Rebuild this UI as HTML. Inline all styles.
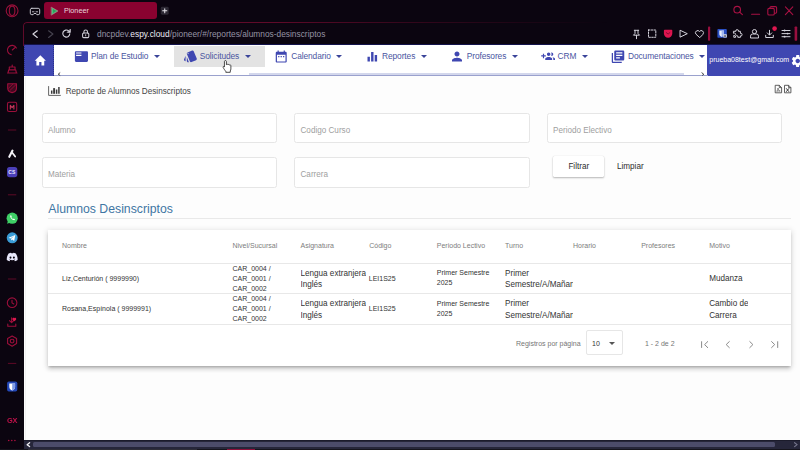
<!DOCTYPE html>
<html lang="es">
<head>
<meta charset="utf-8">
<title>Pioneer</title>
<style>
*{box-sizing:border-box;margin:0;padding:0}
html,body{width:800px;height:450px;overflow:hidden}
body{position:relative;background:#fdfdfd;font-family:"Liberation Sans",sans-serif;font-size:8.1px;color:#333}
.abs{position:absolute}
svg{position:absolute;overflow:visible}
/* browser chrome */
#chrome{left:0;top:0;width:800px;height:45px;background:#0b0510}
#side{left:0;top:0;width:24px;height:450px;background:#0b0510}
#tab{left:44.3px;top:1.9px;width:112.7px;height:17.3px;background:#8a0230;border-radius:3px}
#tab span{position:absolute;left:19.6px;top:3.7px;font-size:7.25px;color:#e9d5dc;white-space:nowrap;line-height:10px}
#frame{left:22.9px;top:21.5px;width:790px;height:24px;border:1px solid #600a29;border-right:0;border-bottom:0;border-radius:4px 0 0 0;pointer-events:none;-webkit-mask-image:linear-gradient(90deg,#000 0,#000 32%,rgba(0,0,0,.5) 48%,rgba(0,0,0,.2) 64%,transparent 74%)}
#url{left:97px;top:27.6px;font-size:8.37px;line-height:12px;color:#9593a3;white-space:nowrap}
#url b{font-weight:normal;color:#ecebf2}
#navline{left:24px;top:43.6px;width:776px;height:1.4px;background:#13134c}
/* app nav */
#nav{left:24px;top:45px;width:776px;height:30.5px;background:#fff}
#home{left:24px;top:45px;width:30.3px;height:30.5px;background:#3f47b1;border-right:1px dotted #2a3085;border-left:1px dotted #2a3085}
#user{left:707.2px;top:45px;width:92.8px;height:30.5px;background:#3f47b1}
#user span{position:absolute;left:2.1px;top:10.3px;font-size:7px;line-height:10px;color:#fff;white-space:nowrap}
#hover{left:174px;top:46px;width:90.5px;height:20.7px;background:#e3e3e3}
.nt{position:absolute;top:50.8px;line-height:10px;font-size:8.4px;letter-spacing:-.09px;color:#4a559f;white-space:nowrap}
.caret{position:absolute;top:55.3px;width:0;height:0;margin-left:-.4px;border-left:3.3px solid transparent;border-right:3.3px solid transparent;border-top:3.5px solid #3a4499}
#sb1{left:54px;top:75px;width:653.5px;height:1.3px;background:#9aa1cd}
#sb2{left:248.5px;top:72.7px;width:435px;height:2.5px;background:#d3d7ec}
/* content */
#leftline{left:25px;top:77px;width:1px;height:363px;background:#f2f2f2}
#title{left:65.7px;top:87.2px;font-size:8.17px;line-height:10px;color:#444;white-space:nowrap}
.inp{position:absolute;height:29.8px;width:235.5px;border:1px solid #e6e6e6;border-radius:2.5px;background:#fff}
.inp span{position:absolute;left:5.5px;top:11.5px;font-size:8.15px;line-height:10px;color:#a0a0a0;white-space:nowrap}
#btn{left:553px;top:156px;width:51px;height:21px;background:#fff;border-radius:1.5px;box-shadow:0 1px 2px rgba(0,0,0,.28),0 0 1px rgba(0,0,0,.15)}
#btn span,#limpiar{position:absolute;font-size:8.15px;line-height:10px;color:#2d2d2d;white-space:nowrap}
#btn span{left:15.4px;top:5.5px}
#limpiar{left:617px;top:161.5px}
#h2{left:48.3px;top:202px;font-size:12.26px;line-height:14px;color:#3f76a3;white-space:nowrap}
#hr{left:48px;top:218.2px;width:743px;height:1px;background:#e9e9e9}
#card{left:48px;top:230px;width:743.3px;height:135.5px;background:#fff;box-shadow:0 2.1px 2.1px -1.2px rgba(0,0,0,.2),0 3.300px 4.200px .4px rgba(0,0,0,.13),0 1.250px 5.800px .8px rgba(0,0,0,.11)}
.rl{position:absolute;left:48px;width:743.3px;height:1px;background:#e8e8e8}
.th{position:absolute;top:240.7px;font-size:7px;line-height:10px;color:#7d7d7d;white-space:nowrap}
.c7{position:absolute;font-size:7px;line-height:10px;color:#333;white-space:nowrap}
.c8{position:absolute;font-size:8.15px;line-height:12.4px;color:#333;white-space:nowrap;overflow:hidden}
/* scrollbar */
#hs{left:24px;top:440px;width:776px;height:8.5px;background:#26263a;border-top:1px solid #1b1b2b}
#hsthumb{left:32.8px;top:442px;width:742.7px;height:5px;background:#4c4c6a;border-radius:1.5px}
#bot{left:0;top:448.5px;width:800px;height:1.5px;background:#15141c}
</style>
</head>
<body>
<div id="chrome" class="abs"></div>
<div id="side" class="abs"></div>
<div id="tab" class="abs"><span>Pioneer</span></div>
<div id="url" class="abs">dncpdev.<b>espy.cloud</b>/pioneer/#/reportes/alumnos-desinscriptos</div>


<!-- CHROME ICONS -->
<svg style="left:0;top:0" width="800" height="45" viewBox="0 0 800 45" fill="none" stroke-linecap="round" stroke-linejoin="round">
  <!-- opera -->
  <circle cx="12.1" cy="10.8" r="5.9" stroke="#98103a" stroke-width="1.1"/>
  <ellipse cx="12.1" cy="10.8" rx="2.8" ry="4.7" stroke="#98103a" stroke-width="1.1"/>
  <!-- workspace icon -->
  <path d="M31.8 8.3h6.4a1.5 1.5 0 0 1 1.5 1.5v3.4a1.5 1.5 0 0 1-1.5 1.5h-1.3l-.9-1.2h-2l-.9 1.2h-1.3a1.5 1.5 0 0 1-1.5-1.5V9.800a1.500 1.500 0 0 1 1.500-1.500z" stroke="#c9c7d0" stroke-width="1"/>
  <path d="M32.400 11.800h1.600M36 11.800h1.600" stroke="#c9c7d0" stroke-width=".9"/>
  <!-- favicon -->
  <path d="M51.500 7.300L58 11l-6.500 4z" fill="#49c17a" stroke="#c07f8f" stroke-width=".6"/>
  <path d="M53 9l3.300 2L53 13z" fill="#2f9d5c" stroke="none"/>
  <!-- new tab -->
  <rect x="160.800" y="6.800" width="7.900" height="7.900" rx="1.400" fill="#2c2833" stroke="none"/>
  <path d="M164.750 8.650v4.200M162.650 10.750h4.200" stroke="#e6e4ea" stroke-width="1.050"/>
  <!-- window controls -->
  <g stroke="#a81143" stroke-width="1.100">
    <circle cx="737.200" cy="9.700" r="3.300"/>
    <path d="M739.700 12.200l2.700 2.500"/>
    <path d="M751.600 14.300h8"/>
    <rect x="767.800" y="8.400" width="6.500" height="6.600" rx="1.300"/>
    <path d="M770 8.200V7.900a1.300 1.300 0 0 1 1.300-1.300h4a1.300 1.300 0 0 1 1.300 1.300v4a1.300 1.300 0 0 1-1.300 1.300h-.8"/>
    <path d="M785.400 6.900l7.400 7.700M792.800 6.900l-7.400 7.700"/>
  </g>
  <!-- url bar icons -->
  <path d="M37.300 30.800l-4.300 3.300 4.300 3.300" stroke="#d9d7e0" stroke-width="1.200"/>
  <path d="M48.600 30.800l4.300 3.300-4.300 3.300" stroke="#45424e" stroke-width="1.200"/>
  <path d="M69.800 33.800a3.500 3.500 0 1 1-1.200-2.900" stroke="#d2d0da" stroke-width="1.150"/>
  <path d="M70.400 29.500v2.900h-2.900z" fill="#d2d0da" stroke="#d2d0da" stroke-width=".7"/>
  <rect x="82.600" y="33" width="6.200" height="4.600" rx="1" stroke="#cfcdd6" stroke-width="1.050"/>
  <path d="M83.900 33v-1.300a1.800 1.800 0 0 1 3.600 0V33" stroke="#cfcdd6" stroke-width="1.050"/>
  <path d="M85.700 34.700v1.200" stroke="#cfcdd6" stroke-width=".9"/>
  <!-- right toolbar -->
  <g stroke="#d3d1da" stroke-width="1">
    <!-- pin -->
    <path d="M634.300 30.300h4.400M635 30.300v3.200l-1.500 1.700h6l-1.500-1.700v-3.200M636.500 35.200v3.500"/>
    <!-- snapshot -->
    <rect x="648.500" y="30" width="7.300" height="7.300" stroke-dasharray="1.600 1.250"/>
    <!-- play -->
    <path d="M680.400 30.400l6.900 3.300-6.900 3.300z"/>
    <!-- heart -->
    <path d="M699.500 37.400l-3.600-3.300a2.050 2.050 0 0 1 3.600-2.600 2.050 2.050 0 0 1 3.600 2.600z"/>
    <!-- puzzle -->
    <path d="M735 31.600h2.100a1.300 1.300 0 1 1 2.500 0h2v2.100a1.300 1.300 0 1 1 0 2.500v1.400h-2.600a1.200 1.200 0 1 0-2.200 0H735v-2a1.250 1.250 0 1 0 0-2.200z" transform="translate(-1.200 -.3)"/>
    <!-- person -->
    <circle cx="754.500" cy="31.600" r="2.100"/>
    <path d="M750.500 37.600v-1.400a2.200 2.200 0 0 1 2.200-2.200h3.600a2.200 2.200 0 0 1 2.200 2.200v1.400z"/>
    <!-- download -->
    <path d="M769.500 30.300v4.500M767.300 32.900l2.200 2.200 2.200-2.200M765.700 35.300v2.200h7.600v-2.200"/>
    <!-- sliders -->
    <path d="M782 30.500h8M782 33.600h8M782 36.700h8"/>
  </g>
  <circle cx="784.600" cy="30.500" r=".9" fill="#d3d1da"/><circle cx="787.600" cy="33.600" r=".9" fill="#d3d1da"/><circle cx="784.600" cy="36.700" r=".9" fill="#d3d1da"/>
  <circle cx="774.600" cy="28.600" r="2.300" fill="#e0174f"/>
  <!-- pocket red -->
  <path d="M664.700 29.700h6.800a.8.800 0 0 1 .8.800v3a4.200 4.200 0 0 1-8.400 0v-3a.8.800 0 0 1 .8-.8z" fill="#de154f"/>
  <path d="M666.300 32.600l1.800 1.500 1.800-1.500" stroke="#7a0a2c" stroke-width=".9"/>
  <!-- bitwarden -->
  <rect x="717.400" y="29.100" width="9.400" height="8.600" rx=".8" fill="#2b50c4"/>
  <path d="M719.300 30.400h4.600v3.300c0 1.700-1.300 2.700-2.300 3.200-1-.5-2.300-1.500-2.300-3.200z" fill="#e9eefc"/>
  <path d="M721.600 30.400h2.300v3.300c0 1.700-1.300 2.700-2.300 3.200z" fill="#9fb4ee"/>
  <rect x="723.300" y="34.300" width="3.500" height="3.300" rx=".5" fill="#dcdde5"/>
  <rect x="724.200" y="35.300" width="1.700" height="1.500" fill="#44465a"/>
  <!-- crimson bars -->
  <rect x="708" y="26.400" width="2.200" height="14.300" rx=".8" fill="#980f3e"/>
  <rect x="794.600" y="26.400" width="2.600" height="14.300" rx=".8" fill="#980f3e"/>
</svg>


<!-- SIDEBAR ICONS -->
<svg style="left:0;top:40px" width="24" height="410" viewBox="0 40 24 410" fill="none" stroke-linecap="round" stroke-linejoin="round">
  <g stroke="#9c0f3b" stroke-width="1.100">
    <!-- speed dial gauge -->
    <path d="M16.400 48.100A4.700 4.700 0 1 0 11.300 54.700"/>
    <path d="M12.300 50l3-2.700"/>
    <!-- bag -->
    <path d="M7.600 73h9.400M8 72.800l.7-3h7l.7 3M9.300 69.700v-2.700h5.700v2.700M12.200 66.900v-1.800" stroke-width="1.150"/>
    <!-- shield -->
    <path d="M7.700 83.700h8.800v4.200c0 2.500-2 4.200-4.400 4.700-2.400-.5-4.400-2.200-4.400-4.700z" fill="rgba(156,15,59,.38)"/>
    <path d="M8.600 88.200l4.300-4.200M10 90.400l6-5.800" stroke-width=".8"/>
    <!-- M box -->
    <rect x="7.500" y="102.300" width="9.200" height="9.200" rx="1.600"/>
    <path d="M10.300 109v-3.600l1.800 2.200 1.800-2.200v3.600" stroke-width="1.100" stroke="#c8385c"/>
    <!-- clock -->
    <circle cx="12.100" cy="302.700" r="4.800"/>
    <path d="M12 300.200v2.700l1.800 1.100"/>
    <!-- download -->
    <path d="M11.600 317.800v4.700M9.500 320.700l2.100 2 2.100-2M7.800 324v2.200h8V324"/>
    <!-- settings hex -->
    <path d="M12.100 335.900l4.500 2.600v5.100l-4.500 2.600-4.500-2.600v-5.100z"/>
    <circle cx="12.100" cy="341.100" r="1.900"/>
  </g>
  <path d="M14.300 318.200c.6-.8 1.900-.3 1.900.7 0 .9-1 1.600-1.900 2.400-.9-.8-1.900-1.500-1.900-2.400 0-1 1.300-1.500 1.900-.7z" fill="#e0174f"/>
  <g stroke="#5e0a27" stroke-width="1">
    <path d="M8.300 130h7.600M8.300 194.800h7.600M8.300 279h7.600M8.300 363.400h7.600"/>
  </g>
  <!-- aria -->
  <path d="M9.300 156.800l3.200-6.200" stroke="#f4f2f7" stroke-width="2.100"/>
  <path d="M12.300 152.700l2.900 3.900" stroke="#f4f2f7" stroke-width="1.700"/>
  <!-- CS -->
  <rect x="7" y="166.900" width="10.300" height="10.300" rx="2.600" fill="#4b3fb8"/>
  <!-- whatsapp -->
  <circle cx="12.200" cy="218.200" r="5.600" fill="#3ecf66"/>
  <path d="M7.100 223.800l.9-3 1.900 1.900z" fill="#3ecf66"/>
  <path d="M10.200 215.600c-.5 1.900 1.900 4.500 4.200 4.700l.7-.9-1.300-.8-.6.500c-.8-.3-1.600-1.200-1.900-2l.5-.5-.7-1.400z" fill="#fff"/>
  <!-- telegram -->
  <circle cx="12.200" cy="237.800" r="5.500" fill="#3a9bd6"/>
  <path d="M8.700 237.800l6.600-2.800-1.100 6-2.100-1.500-1 1v-1.700l3-2.800-3.800 2.400z" fill="#fff"/>
  <!-- discord -->
  <path d="M8.600 253.500c1-.5 1.800-.7 2.400-.8l.3.600c.6-.1 1.200-.1 1.800 0l.3-.6c.6.100 1.400.3 2.400.8 1.300 2 2 4.100 1.800 6.400-.9.700-1.800 1.100-2.700 1.400l-.6-1c.3-.1.600-.3.900-.5l-.2-.2c-1.800.8-3.800.8-5.600 0l-.2.200c.3.200.6.400.9.500l-.6 1c-.9-.3-1.800-.7-2.700-1.400-.2-2.300.5-4.400 1.800-6.400z" fill="#e9e8fb"/>
  <ellipse cx="10.500" cy="257.600" rx="1" ry="1.150" fill="#0b0510"/><ellipse cx="13.900" cy="257.600" rx="1" ry="1.150" fill="#0b0510"/>
  <!-- bitwarden -->
  <rect x="7.100" y="381.400" width="10.200" height="10.200" rx="1.800" fill="#2348b8"/>
  <path d="M9.300 383.400h5.800v3.600c0 1.900-1.500 3-2.900 3.600-1.400-.6-2.900-1.700-2.900-3.600z" fill="#fff"/>
  <path d="M12.200 383.400h2.900v3.600c0 1.900-1.500 3-2.900 3.600z" fill="#7f9be6"/>
  <!-- dots -->
  <circle cx="8.700" cy="440.500" r=".8" fill="#b01040"/><circle cx="11.800" cy="440.500" r=".8" fill="#b01040"/><circle cx="14.900" cy="440.500" r=".8" fill="#b01040"/>
</svg>
<div class="abs" style="left:8.300px;top:168.700px;font-size:5px;line-height:7px;font-weight:bold;color:#e8e6ff;letter-spacing:.2px">CS</div>
<div class="abs" style="left:6.600px;top:416.600px;font-size:6.400px;line-height:8px;font-weight:bold;color:#c0124a;letter-spacing:-.2px;transform:scaleX(1.150);transform-origin:0 0">GX</div>

<!-- APP NAV -->
<div id="nav" class="abs"></div>
<div id="navline" class="abs"></div>
<div id="home" class="abs"></div>
<div id="hover" class="abs"></div>
<div id="user" class="abs"><span>prueba08test@gmail.com</span></div>
<div class="nt" style="left:91px">Plan de Estudio</div><i class="caret" style="left:154.3px"></i>
<div class="nt" style="left:199.7px">Solicitudes</div><i class="caret" style="left:245.8px"></i>
<div class="nt" style="left:291.2px">Calendario</div><i class="caret" style="left:336.8px"></i>
<div class="nt" style="left:382px">Reportes</div><i class="caret" style="left:421.2px"></i>
<div class="nt" style="left:466.7px">Profesores</div><i class="caret" style="left:512.5px"></i>
<div class="nt" style="left:557.5px">CRM</div><i class="caret" style="left:582.5px"></i>
<div class="nt" style="left:628px">Documentaciones</div><i class="caret" style="left:699.3px"></i>
<div id="sb2" class="abs"></div>
<div id="sb1" class="abs"></div>


<!-- NAV ICONS -->
<svg style="left:0;top:45px" width="800" height="31" viewBox="0 45 800 31">
  <!-- home -->
  <g transform="translate(33.600 53.300) scale(.56 .615)" fill="#fff"><path d="M10 20v-6h4v6h5v-8h3L12 3 2 12h3v8z"/></g>
  <g fill="#3f47b1">
  <!-- featured_play_list -->
  <g transform="translate(74.300 49.400) scale(.595)"><path d="M21 3H3c-1.100 0-2 .9-2 2v14c0 1.100.9 2 2 2h18c1.100 0 2-.9 2-2V5c0-1.100-.9-2-2-2zm-9 8H3V9h9v2zm0-4H3V5h9v2z"/></g>
  <!-- style -->
  <g transform="translate(183.200 48.800) scale(.615)"><path d="M2.530 19.650l1.340.56v-9.030l-2.430 5.860c-.41 1.020.08 2.190 1.090 2.610zm19.500-3.700L17.070 3.980c-.31-.75-1.040-1.210-1.810-1.230-.26 0-.53.040-.79.150L7.100 5.950c-.75.310-1.210 1.030-1.230 1.800-.01.270.04.540.15.800l4.960 11.970c.31.760 1.050 1.220 1.830 1.230.26 0 .52-.05.770-.15l7.360-3.050c1.020-.42 1.510-1.590 1.090-2.600zM7.880 8.750c-.55 0-1-.45-1-1s.45-1 1-1 1 .45 1 1-.45 1-1 1zm-2 11c0 1.100.9 2 2 2h1.450l-3.450-8.340v6.340z"/></g>
  <!-- date_range -->
  <g transform="translate(273.900 49.200) scale(.61)"><path d="M9 11H7v2h2v-2zm4 0h-2v2h2v-2zm4 0h-2v2h2v-2zm2-7h-1V2h-2v2H8V2H6v2H5c-1.110 0-1.990.9-1.990 2L3 20c0 1.100.89 2 2 2h14c1.100 0 2-.9 2-2V6c0-1.100-.9-2-2-2zm0 16H5V9h14v11z"/></g>
  <!-- equalizer -->
  <g transform="translate(365.100 49.600) scale(.6)"><path d="M10 20h4V4h-4v16zm-6 0h4v-8H4v8zM16 9v11h4V9h-4z"/></g>
  <!-- person -->
  <g transform="translate(449.500 49.100) scale(.625)"><path d="M12 12c2.210 0 4-1.790 4-4s-1.790-4-4-4-4 1.790-4 4 1.790 4 4 4zm0 2c-2.670 0-8 1.340-8 4v2h16v-2c0-2.660-5.330-4-8-4z"/></g>
  <!-- group_add -->
  <g transform="translate(541.200 49.600) scale(.575)"><path d="M8 10H5V7H3v3H0v2h3v3h2v-3h3v-2zm10 1c1.660 0 2.990-1.340 2.990-3S19.660 5 18 5c-.32 0-.63.050-.91.140.57.810.9 1.790.9 2.860s-.34 2.040-.9 2.860c.28.090.59.140.91.140zm-5 0c1.660 0 2.990-1.340 2.990-3S14.660 5 13 5c-1.660 0-3 1.340-3 3s1.340 3 3 3zm6.620 2.160c.83.730 1.380 1.660 1.380 2.840v2h3v-2c0-1.540-2.370-2.490-4.380-2.840zM13 13c-2 0-6 1-6 3v2h12v-2c0-2-4-3-6-3z"/></g>
  <!-- library_books -->
  <g transform="translate(610.500 49.200) scale(.625)"><path d="M4 6H2v14c0 1.100.9 2 2 2h14v-2H4V6zm16-4H8c-1.100 0-2 .9-2 2v12c0 1.100.9 2 2 2h12c1.100 0 2-.9 2-2V4c0-1.100-.9-2-2-2zm-1 9H9V9h10v2zm-4 4H9v-2h6v2zm4-8H9V5h10v2z"/></g>
  </g>
  <!-- settings gear -->
  <g transform="translate(790.300 53.600) scale(.62)" fill="#fff"><path d="M19.140 12.940c.04-.3.060-.61.060-.94 0-.32-.02-.64-.07-.94l2.030-1.580c.18-.14.230-.41.120-.61l-1.920-3.320c-.12-.22-.37-.29-.59-.22l-2.390.96c-.5-.38-1.030-.7-1.620-.94l-.36-2.540c-.04-.24-.24-.41-.48-.41h-3.840c-.24 0-.43.170-.47.410l-.36 2.540c-.59.240-1.130.57-1.620.94l-2.390-.96c-.22-.08-.47 0-.59.220L2.740 8.870c-.12.210-.08.470.12.610l2.030 1.580c-.5.300-.9.630-.9.940s.2.640.7.940l-2.030 1.580c-.18.140-.23.410-.12.610l1.920 3.320c.12.220.37.290.59.220l2.390-.96c.5.380 1.030.7 1.620.94l.36 2.540c.5.240.24.410.48.410h3.840c.24 0 .44-.17.470-.41l.36-2.540c.59-.24 1.130-.56 1.620-.94l2.390.96c.22.080.47 0 .59-.22l1.920-3.320c.12-.22.070-.47-.12-.61l-2.010-1.580zM12 15.600c-1.980 0-3.600-1.620-3.600-3.600s1.620-3.600 3.600-3.600 3.600 1.620 3.600 3.600-1.620 3.600-3.600 3.600z"/></g>
  <!-- scroll arrows -->
  <path d="M60.200 72.600l-2 1.600 2 1.300" fill="none" stroke="#333" stroke-width=".9"/>
  <path d="M701.600 72.600l2.200 1.700-1.600 1.200" fill="none" stroke="#333" stroke-width=".9"/>
  <!-- cursor hand -->
  <g transform="translate(221.700 59.600) scale(.62)" stroke="#222" stroke-width="1.300" fill="#fff" stroke-linejoin="round">
    <path d="M6 1.500c.9 0 1.600.7 1.600 1.600v5.200l.2-.1c.3-.9 2.100-.9 2.400.2.500-.8 2.200-.7 2.400.5.600-.7 2.200-.4 2.200.9v5.200c0 1.300-.4 2.300-1 3.300v2.200H6.600v-1.700c-1.400-1.300-2.700-3.300-4.300-6.200-.6-1.100.8-2.100 1.800-1.100l.3.400V3.100c0-.9.700-1.600 1.600-1.600z"/>
  </g>
</svg>

<!-- CONTENT ICONS -->
<svg style="left:0;top:80px" width="800" height="20" viewBox="0 80 800 20" fill="none">
  <path d="M48.600 86.100v9.300h12.200" stroke="#666" stroke-width="1"/>
  <path d="M51.700 93.800v-3.300" stroke="#3c3c3c" stroke-width="1.500"/><path d="M54.100 93.800v-5.700" stroke="#3c3c3c" stroke-width="1.900"/><path d="M56.600 93.800v-4.300" stroke="#3c3c3c" stroke-width="1.500"/><path d="M58.900 93.800v-6.800" stroke="#3c3c3c" stroke-width="1.500"/>
  <g stroke="#444" stroke-width=".85">
    <path d="M775.200 85.300h4.100l2.300 2.300v5.200h-6.400zM779.300 85.300v2.300h2.300"/>
    <path d="M776.700 91.300c.9-.8 1.400-2.300 1.400-3.300-.5 1.500.7 2.800 2.100 3-1.100-.2-2.400 0-3.500.3z" stroke-width=".6"/>
    <path d="M784.500 85.300h4.100l2.300 2.300v5.200h-6.400zM788.600 85.300v2.300h2.300"/>
    <path d="M786.200 88.300l2.800 3.500M789 88.300l-2.800 3.500" stroke-width=".95" stroke="#333"/>
  </g>
</svg>


<!-- CONTENT -->
<div id="leftline" class="abs"></div>
<div id="title" class="abs">Reporte de Alumnos Desinscriptos</div>
<div class="inp" style="left:41.5px;top:113.3px"><span>Alumno</span></div>
<div class="inp" style="left:294px;top:113.3px"><span>Codigo Curso</span></div>
<div class="inp" style="left:546.5px;top:113.3px"><span>Periodo Electivo</span></div>
<div class="inp" style="left:41.5px;top:157.3px;height:30.6px"><span style="top:12.2px">Materia</span></div>
<div class="inp" style="left:294px;top:157.3px;height:30.6px"><span style="top:12.2px">Carrera</span></div>
<div id="btn" class="abs"><span>Filtrar</span></div>
<div id="limpiar">Limpiar</div>
<div id="h2" class="abs">Alumnos Desinscriptos</div>
<div id="hr" class="abs"></div>

<div id="card" class="abs"></div>
<div class="rl" style="top:263px"></div>
<div class="rl" style="top:293px"></div>
<div class="rl" style="top:324px"></div>
<div class="th" style="left:62px">Nombre</div>
<div class="th" style="left:232.5px">Nivel/Sucursal</div>
<div class="th" style="left:300.5px">Asignatura</div>
<div class="th" style="left:369.2px">Código</div>
<div class="th" style="left:436.8px">Periodo Lectivo</div>
<div class="th" style="left:505px">Turno</div>
<div class="th" style="left:573px">Horario</div>
<div class="th" style="left:641.2px">Profesores</div>
<div class="th" style="left:709.2px">Motivo</div>

<!-- row 1 -->
<div class="c7" style="left:62px;top:273.8px">Liz,Centurión ( 9999990)</div>
<div class="c7" style="left:232.5px;top:263.5px">CAR_0004 /<br>CAR_0001 /<br>CAR_0002</div>
<div class="c8" style="left:300.5px;top:267.6px;line-height:11.7px">Lengua extranjera<br>Inglés</div>
<div class="c7" style="left:368.8px;top:274px">LEI1S25</div>
<div class="c7" style="left:436.8px;top:267.9px;line-height:10.4px">Primer Semestre<br>2025</div>
<div class="c8" style="left:505px;top:267.9px;width:67.5px;line-height:11.6px">Primer<br>Semestre/A/Mañana</div>
<div class="c8" style="left:709.2px;top:273.2px">Mudanza</div>
<!-- row 2 -->
<div class="c7" style="left:62px;top:304.1px">Rosana,Espínola ( 9999991)</div>
<div class="c7" style="left:232.5px;top:294.2px">CAR_0004 /<br>CAR_0001 /<br>CAR_0002</div>
<div class="c8" style="left:300.5px;top:298px;line-height:11.6px">Lengua extranjera<br>Inglés</div>
<div class="c7" style="left:368.8px;top:304.2px">LEI1S25</div>
<div class="c7" style="left:436.8px;top:299.1px;line-height:10px">Primer Semestre<br>2025</div>
<div class="c8" style="left:505px;top:298.3px;width:67.5px;line-height:11.5px">Primer<br>Semestre/A/Mañana</div>
<div class="c8" style="left:709.2px;top:298.1px;line-height:11.5px">Cambio de<br>Carrera</div>

<!-- footer -->
<div class="c7" style="left:516px;top:339.3px;color:#757575">Registros por página</div>
<div class="abs" style="left:586px;top:330px;width:37px;height:25px;border:1px solid #e6e6e6;border-radius:2px"></div>
<div class="c7" style="left:592px;top:339.3px">10</div>
<i class="caret" style="left:609.6px;top:341.6px;border-top-color:#555;border-left-width:3.1px;border-right-width:3.1px"></i>
<div class="c7" style="left:645px;top:339.3px;color:#757575">1 - 2 de 2</div>

<!-- PAGINATION ICONS -->
<svg style="left:690px;top:335px" width="100" height="20" viewBox="690 335 100 20" fill="none" stroke="#8a8a8a" stroke-width="1">
  <path d="M701.600 341.300v6.600M708 341.300l-3.400 3.300 3.400 3.300"/>
  <path d="M729.600 341.300l-3.400 3.300 3.400 3.300"/>
  <path d="M749.500 341.300l3.400 3.300-3.400 3.300"/>
  <path d="M771.300 341.300l3.400 3.300-3.400 3.300M777.700 341.300v6.600"/>
</svg>

<!-- scrollbar -->
<div id="hs" class="abs"></div>
<div id="hsthumb" class="abs"></div>
<svg style="left:24px;top:440px" width="776" height="9" viewBox="24 440 776 9" fill="none" stroke-linecap="round" stroke-linejoin="round">
  <path d="M29.600 442.700l-2.500 1.950 2.500 1.950" stroke="#f2f2f6" stroke-width="1.300"/>
  <path d="M794.600 442.700l2.500 1.950-2.500 1.950" stroke="#75758c" stroke-width="1.200"/>
</svg>
<div id="bot" class="abs"></div>
<div class="abs" style="left:28px;top:449px;width:169px;height:1px;background:#2f2e38"></div>
<div class="abs" style="left:227px;top:449px;width:27.5px;height:1px;background:#8f0f3a"></div>
<div id="frame" class="abs"></div>
</body>
</html>
